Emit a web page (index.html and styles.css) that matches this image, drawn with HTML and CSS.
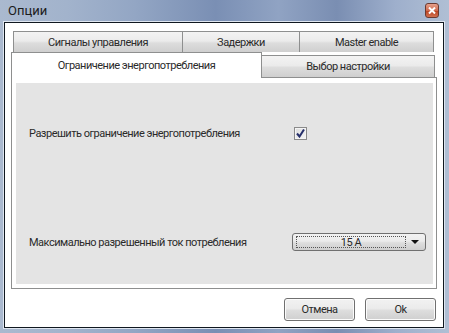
FILE: index.html
```html
<!DOCTYPE html>
<html lang="ru">
<head>
    <meta charset="UTF-8">
    <title>Опции</title>
    <link rel="stylesheet" href="styles.css">
</head>
<body>
    <div class="window">
        <div class="titlebar">
            <span class="title">Опции</span>
            <span class="close">
                <svg width="8" height="7" viewBox="0 0 8 7"><path d="M1 0.5 L7 6.5 M7 0.5 L1 6.5" stroke="#fff" stroke-width="2"/></svg>
            </span>
        </div>
        <div class="client">
            <div class="tabs">
                <div class="tab-row back">
                    <div class="tab t1">Сигналы управления</div>
                    <div class="tab t2">Задержки</div>
                    <div class="tab t3">Master enable</div>
                </div>
                <div class="tab-row front">
                    <div class="tab active">Ограничение энергопотребления</div>
                    <div class="tab t5">Выбор настройки</div>
                </div>
            </div>
            <div class="panel">
                <div class="panel-body">
                    <div class="setting first">
                        <span class="setting-label">Разрешить ограничение энергопотребления</span>
                        <span class="checkbox">
                            <svg width="9" height="9" viewBox="0 0 9 9"><path d="M1 4.5 L3.5 7.5 L8 0.5" fill="none" stroke="#262f6b" stroke-width="2"/></svg>
                        </span>
                    </div>
                    <div class="setting second">
                        <span class="setting-label">Максимально разрешенный ток потребления</span>
                        <span class="combo">
                            <span class="combo-value">15 A</span>
                            <span class="combo-arrow"></span>
                        </span>
                    </div>
                </div>
            </div>
            <div class="buttons">
                <button class="btn">Отмена</button>
                <button class="btn">Ok</button>
            </div>
        </div>
    </div>
</body>
</html>
```

FILE: styles.css
```css
body {
    margin: 0;
    font-family: Roboto, "Noto Sans", sans-serif;
    font-size: 11px;
    letter-spacing: -0.5px;
    color: #2a2a2a;
}
.window {
    width: 449px;
    height: 333px;
    box-sizing: border-box;
    padding: 0 5px 5px 4px;
    display: flex;
    flex-direction: column;
    background: linear-gradient(90deg, #aab9cf 0%, #a2b3cc 15%, #93a6c4 30%, #7a8fb4 48%, #90a3c3 62%, #7a8eb2 75%, #9eafcc 88%, #b0bfd4 100%);
}
.titlebar {
    height: 22px;
    display: flex;
    align-items: center;
    justify-content: space-between;
    padding: 0 5px 0 4px;
    box-sizing: border-box;
}
.title {
    font-size: 13px;
    letter-spacing: 0;
    color: #1c1c1c;
    margin-top: -2px;
}
.close {
    width: 14px;
    height: 15px;
    margin-top: -1px;
    box-sizing: border-box;
    border: 1px solid #6b3a30;
    border-radius: 3px;
    background: linear-gradient(#e6a08b, #cf6a4e 50%, #b9401f 51%, #d2704f);
    display: flex;
    align-items: center;
    justify-content: center;
}
.client {
    flex: 1;
    background: #fff;
    border: 1px solid #101820;
    box-shadow: 0 0 0 1px #dfe6f0;
    display: flex;
    flex-direction: column;
}
.tabs {
    padding: 8px 6px 0 6px;
}
.tab-row {
    display: flex;
}
.tab {
    box-sizing: border-box;
    border: 1px solid #8e8f8f;
    border-bottom: none;
    background: linear-gradient(#f3f3f3, #ebebeb 45%, #dddddd 55%, #cfcfcf);
    text-align: center;
    line-height: 22px;
}
.back {
    margin: 0 2px;
    height: 21px;
}
.t1 { width: 170px; }
.t2 { width: 118px; margin-left: -1px; }
.t3 { width: 135px; margin-left: -1px; }
.front {
    height: 25px;
}
.active {
    width: 251px;
    height: 26px;
    background: #fff;
    line-height: 25px;
    position: relative;
    z-index: 1;
}
.t5 {
    width: 174px;
    height: 22px;
    margin-top: 3px;
    margin-left: -1px;
    line-height: 22px;
}
.panel {
    margin-left: 6px;
    width: 426px;
    height: 212px;
    box-sizing: border-box;
    border: 1px solid #8e8f8f;
    padding: 5px 3px 4px 4px;
    display: flex;
}
.panel-body {
    flex: 1;
    background: #e4e4e4;
    padding-left: 13px;
}
.setting {
    display: flex;
    align-items: center;
    height: 18px;
}
.first {
    margin-top: 41px;
}
.second {
    margin-top: 91px;
}
.setting-label {
    width: 263px;
}
.checkbox {
    width: 13px;
    height: 13px;
    box-sizing: border-box;
    margin-left: 2px;
    border: 1px solid #8a8a8a;
    background: linear-gradient(135deg, #dcdcdc, #f6f6f6);
    box-shadow: inset 0 0 0 1px #f4f4f4;
    display: flex;
    align-items: center;
    justify-content: center;
}
.combo {
    width: 134px;
    height: 18px;
    box-sizing: border-box;
    border: 1px solid #707070;
    border-radius: 3px;
    background: linear-gradient(#f2f2f2, #ebebeb 45%, #dddddd 55%, #cfcfcf);
    display: flex;
    align-items: center;
    padding: 0 6px 0 3px;
}
.combo-value {
    width: 110px;
    height: 12px;
    box-sizing: border-box;
    border: 1px dotted #555;
    text-align: center;
    line-height: 11px;
}
.combo-arrow {
    margin-left: auto;
    width: 0;
    height: 0;
    border-left: 4px solid transparent;
    border-right: 4px solid transparent;
    border-top: 4px solid #111;
}
.buttons {
    display: flex;
    justify-content: flex-end;
    gap: 10px;
    padding: 9px 7px 0 0;
}
.btn {
    width: 71px;
    height: 23px;
    font-family: Roboto, "Noto Sans", sans-serif;
    font-size: 11px;
    letter-spacing: -0.5px;
    color: #2a2a2a;
    border: 1px solid #707070;
    border-radius: 3px;
    background: linear-gradient(#f2f2f2, #ebebeb 45%, #dddddd 55%, #cfcfcf);
    box-shadow: inset 0 0 0 1px #fbfbfb;
    padding: 0;
}
```
